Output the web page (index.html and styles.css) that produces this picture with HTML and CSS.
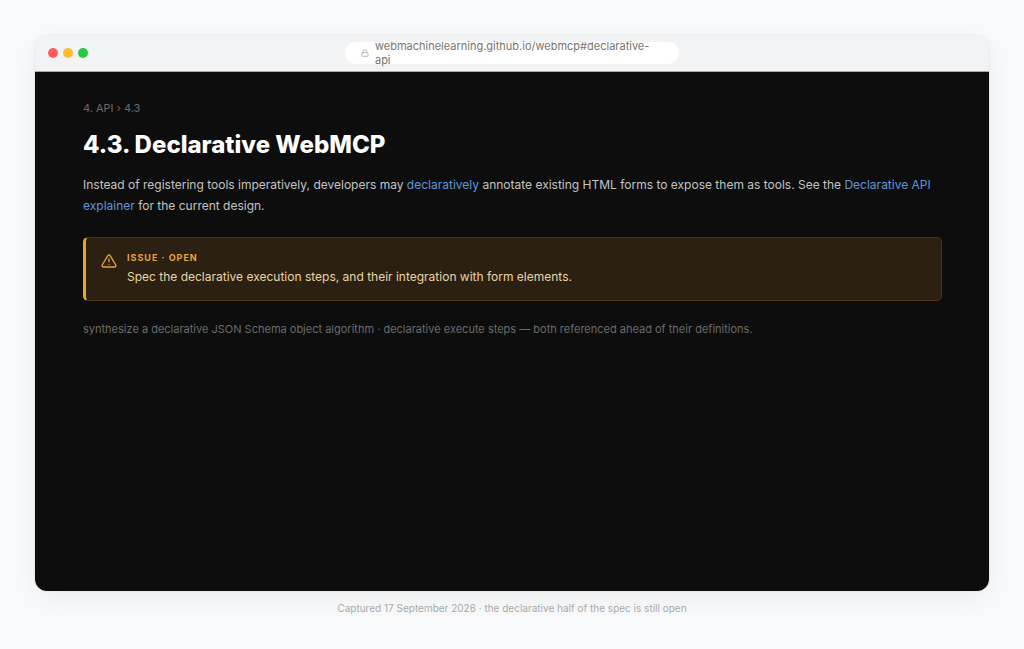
FILE: index.html
```html
<!DOCTYPE html>
<html lang="en">
<head>
    <meta charset="UTF-8">
    <meta name="viewport" content="width=device-width, initial-scale=1.0">
    <title>4.3. Declarative WebMCP</title>
    <link rel="stylesheet" href="styles.css">
</head>
<body>
    <figure class="capture">
        <div class="window">
            <div class="titlebar">
                <div class="lights">
                    <span class="light red"></span>
                    <span class="light yellow"></span>
                    <span class="light green"></span>
                </div>
                <div class="address">
                    <svg class="lock" viewBox="0 0 24 24" fill="none" stroke="currentColor" stroke-width="2" stroke-linecap="round" stroke-linejoin="round" aria-hidden="true">
                        <rect x="3" y="11" width="18" height="11" rx="2"/>
                        <path d="M7 11V7a5 5 0 0 1 10 0v4"/>
                    </svg>
                    <span class="url">webmachinelearning.github.io/webmcp#declarative-api</span>
                </div>
            </div>
            <main class="page">
                <nav class="breadcrumb" aria-label="Breadcrumb">4. API › 4.3</nav>
                <h1>4.3. Declarative WebMCP</h1>
                <p class="intro">Instead of registering tools imperatively, developers may <a href="#declarative">declaratively</a> annotate existing HTML forms to expose them as tools. See the <a href="#explainer">Declarative API explainer</a> for the current design.</p>
                <div class="issue">
                    <svg class="warning" viewBox="0 0 24 24" fill="none" stroke="currentColor" stroke-width="2" stroke-linecap="round" stroke-linejoin="round" aria-hidden="true">
                        <path d="M10.29 3.86 1.82 18a2 2 0 0 0 1.71 3h16.94a2 2 0 0 0 1.71-3L13.71 3.86a2 2 0 0 0-3.42 0z"/>
                        <path d="M12 9v4M12 17h.01"/>
                    </svg>
                    <div>
                        <div class="issue-label">ISSUE · OPEN</div>
                        <p class="issue-text">Spec the declarative execution steps, and their integration with form elements.</p>
                    </div>
                </div>
                <p class="note">synthesize a declarative JSON Schema object algorithm · declarative execute steps — both referenced ahead of their definitions.</p>
            </main>
        </div>
        <figcaption>Captured 17 September 2026 · the declarative half of the spec is still open</figcaption>
    </figure>
</body>
</html>
```

FILE: styles.css
```css
* {
    box-sizing: border-box;
}
body {
    margin: 0;
    background-color: #f9fafc;
    font-family: Inter, "Liberation Sans", sans-serif;
}
h1, p {
    margin: 0;
}
a {
    color: #5f97d8;
    text-decoration: none;
}
a:hover {
    text-decoration: underline;
}
.capture {
    display: flex;
    flex-direction: column;
    min-height: 100vh;
    margin: 0;
    padding: 35px 35px 33px;
}
.window {
    display: flex;
    flex-direction: column;
    flex: 1;
    border-radius: 12px;
    overflow: hidden;
    box-shadow: 0 0 0 1px rgba(0, 0, 0, 0.03), 0 8px 32px rgba(0, 0, 0, 0.06);
}
.titlebar {
    display: grid;
    grid-template-columns: 1fr 36% 1fr;
    align-items: center;
    height: 37px;
    padding: 0 13px;
    background-color: #f2f3f5;
    border-bottom: 1px solid #a8aaac;
}
.lights {
    display: flex;
    gap: 5px;
}
.light {
    width: 10px;
    height: 10px;
    border-radius: 50%;
}
.red {
    background-color: #ff5f57;
}
.yellow {
    background-color: #febc2e;
}
.green {
    background-color: #28c840;
}
.address {
    grid-column: 2;
    display: flex;
    align-items: center;
    gap: 6px;
    height: 22px;
    padding: 0 16px;
    border-radius: 11px;
    background-color: white;
    color: #77736f;
    font-size: 11px;
    line-height: 14px;
}
.lock {
    flex: none;
    width: 8px;
    height: 8px;
    color: #a09c98;
}
.page {
    flex: 1;
    padding: 28px 47px 28px 48px;
    background-color: #0d0d0d;
}
.breadcrumb {
    color: #6b6b6b;
    font-size: 11px;
    line-height: 16px;
}
h1 {
    margin-top: 12px;
    color: white;
    font-size: 24px;
    line-height: 34px;
    font-weight: 800;
}
.intro {
    margin-top: 12px;
    color: #c4c4c4;
    font-size: 12px;
    line-height: 21px;
}
.issue {
    display: flex;
    gap: 10px;
    margin-top: 21px;
    padding: 12px 15px;
    border: 1px solid #4a3212;
    border-left: 3px solid #e8a435;
    border-radius: 5px;
    background-color: #2c2012;
}
.warning {
    flex: none;
    width: 16px;
    height: 16px;
    margin-top: 3px;
    color: #e8a435;
}
.issue-label {
    color: #e8a435;
    font-size: 9px;
    line-height: 16px;
    font-weight: 700;
    letter-spacing: 1px;
}
.issue-text {
    color: #e8d5a8;
    font-size: 12px;
    line-height: 22px;
}
.note {
    margin-top: 18px;
    color: #6b6b6b;
    font-size: 11px;
    line-height: 20px;
}
figcaption {
    margin-top: 9px;
    color: #aaa9a7;
    font-size: 10px;
    line-height: 16px;
    text-align: center;
}
```
